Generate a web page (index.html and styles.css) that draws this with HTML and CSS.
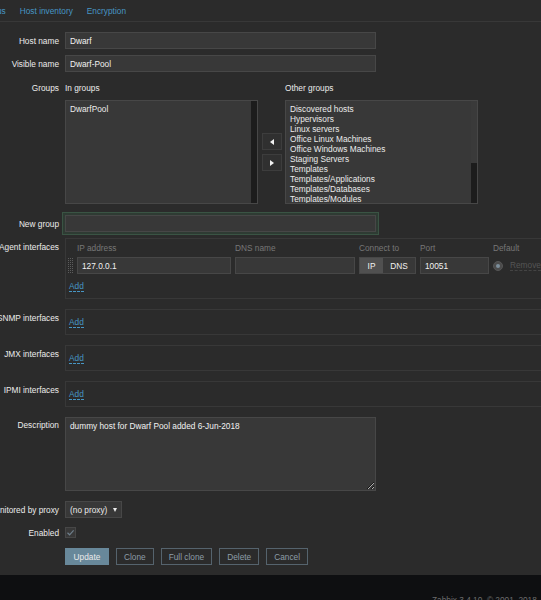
FILE: index.html
```html
<!DOCTYPE html>
<html lang="en">
<head>
    <meta charset="UTF-8">
    <meta name="viewport" content="width=device-width, initial-scale=1.0">
    <title>Configuration of hosts</title>
    <link rel="stylesheet" href="styles.css">
</head>
<body>

    <!-- Tabs -->
    <ul class="tabs">
        <li><a href="#">us</a></li>
        <li><a href="#">Host inventory</a></li>
        <li><a href="#">Encryption</a></li>
    </ul>

    <!-- Host Form -->
    <form class="host-form">
        <div class="form-row row-first">
            <label class="form-label">Host name</label>
            <div class="form-field"><input type="text" class="text-box" value="Dwarf"></div>
        </div>

        <div class="form-row row-visible">
            <label class="form-label">Visible name</label>
            <div class="form-field"><input type="text" class="text-box" value="Dwarf-Pool"></div>
        </div>

        <div class="form-row row-top row-groups">
            <label class="form-label">Groups</label>
            <div class="form-field groups">
                <div class="groups-title">In groups</div>
                <div></div>
                <div class="groups-title">Other groups</div>

                <div class="list-box">
                    <div class="list-items">
                        <div>DwarfPool</div>
                    </div>
                    <div class="list-scroll"></div>
                </div>

                <div class="move-buttons">
                    <button type="button" class="move-btn"><span class="arrow-left"></span></button>
                    <button type="button" class="move-btn"><span class="arrow-right"></span></button>
                </div>

                <div class="list-box">
                    <div class="list-items">
                        <div>Discovered hosts</div>
                        <div>Hypervisors</div>
                        <div>Linux servers</div>
                        <div>Office Linux Machines</div>
                        <div>Office Windows Machines</div>
                        <div>Staging Servers</div>
                        <div>Templates</div>
                        <div>Templates/Applications</div>
                        <div>Templates/Databases</div>
                        <div>Templates/Modules</div>
                    </div>
                    <div class="list-scroll">
                        <div class="scroll-track"></div>
                        <div class="scroll-thumb"></div>
                    </div>
                </div>
            </div>
        </div>

        <div class="form-row row-newgroup">
            <label class="form-label">New group</label>
            <div class="form-field"><input type="text" class="text-box new-group" value=""></div>
        </div>

        <!-- Interfaces -->
        <div class="form-row row-top row-agent">
            <label class="form-label label-panel">Agent interfaces</label>
            <div class="form-field">
                <div class="panel">
                    <div class="iface-grid">
                        <div></div>
                        <div class="iface-head">IP address</div>
                        <div class="iface-head">DNS name</div>
                        <div class="iface-head">Connect to</div>
                        <div class="iface-head">Port</div>
                        <div class="iface-head">Default</div>

                        <div class="drag-handle"></div>
                        <input type="text" class="text-box" value="127.0.0.1">
                        <input type="text" class="text-box" value="">
                        <div class="toggle">
                            <span class="toggle-item active">IP</span>
                            <span class="toggle-item">DNS</span>
                        </div>
                        <input type="text" class="text-box" value="10051">
                        <div class="default-cell">
                            <span class="radio"></span>
                            <span class="remove-link">Remove</span>
                        </div>
                    </div>
                    <div class="add-row"><a href="#" class="add-link">Add</a></div>
                </div>
            </div>
        </div>

        <div class="form-row row-top">
            <label class="form-label label-panel">SNMP interfaces</label>
            <div class="form-field">
                <div class="panel panel-small"><a href="#" class="add-link">Add</a></div>
            </div>
        </div>

        <div class="form-row row-top">
            <label class="form-label label-panel">JMX interfaces</label>
            <div class="form-field">
                <div class="panel panel-small"><a href="#" class="add-link">Add</a></div>
            </div>
        </div>

        <div class="form-row row-top">
            <label class="form-label label-panel">IPMI interfaces</label>
            <div class="form-field">
                <div class="panel panel-small"><a href="#" class="add-link">Add</a></div>
            </div>
        </div>

        <div class="form-row row-top">
            <label class="form-label label-desc">Description</label>
            <div class="form-field">
                <textarea class="text-area">dummy host for Dwarf Pool added 6-Jun-2018</textarea>
            </div>
        </div>

        <div class="form-row">
            <label class="form-label">Monitored by proxy</label>
            <div class="form-field">
                <div class="select-box">(no proxy) <span class="select-arrow"></span></div>
            </div>
        </div>

        <div class="form-row row-enabled">
            <label class="form-label">Enabled</label>
            <div class="form-field">
                <span class="check-box">
                    <svg width="9" height="9" viewBox="0 0 9 9"><polyline points="1.5,4.8 3.6,6.8 7.6,2.4" fill="none" stroke="#6e7f8b" stroke-width="1.2"/></svg>
                </span>
            </div>
        </div>

        <div class="form-row">
            <div></div>
            <div class="form-field buttons">
                <button type="button" class="btn btn-main">Update</button>
                <button type="button" class="btn">Clone</button>
                <button type="button" class="btn">Full clone</button>
                <button type="button" class="btn">Delete</button>
                <button type="button" class="btn">Cancel</button>
            </div>
        </div>
    </form>

    <!-- Footer -->
    <div class="footer">Zabbix 3.4.10. &copy; 2001&ndash;2018, Zabbix SIA</div>

</body>
</html>
```

FILE: styles.css
```css
/* General Styles */
html, body {
    overflow: hidden;
}

body {
    margin: 0;
    padding: 0;
    background-color: #2b2b2b;
    color: #ebebeb;
    font-family: "Liberation Sans", Arial, sans-serif;
    font-size: 8.3px;
    line-height: 10px;
}

a {
    color: #4796c4;
    text-decoration: none;
}

/* Tabs */
.tabs {
    display: flex;
    gap: 14px;
    list-style: none;
    margin: 0 0 0 -3px;
    padding: 6px 0 0 0;
    height: 15px;
    border-bottom: 1px solid #383838;
}

/* Form layout */
.host-form {
    padding: 10px 0 10px 0;
}

.form-row {
    display: grid;
    grid-template-columns: 59px 1fr;
    column-gap: 6px;
    align-items: center;
    margin-top: 10px;
}

.row-top {
    align-items: start;
}

.row-first {
    margin-top: 0;
}

.row-visible {
    margin-top: 6px;
}

.row-groups {
    margin-top: 11px;
}

.row-newgroup {
    margin-top: 11px;
}

.row-agent {
    margin-top: 6px;
}

.row-enabled {
    margin-top: 9px;
}

.form-label {
    display: flex;
    justify-content: flex-end;
    white-space: nowrap;
}

.label-panel {
    padding-top: 4px;
}

.label-desc {
    padding-top: 3px;
}

.form-field {
    min-width: 0;
}

/* Inputs */
.text-box {
    display: block;
    box-sizing: border-box;
    width: 311px;
    height: 17px;
    margin: 0;
    padding: 0 4px;
    background-color: #383838;
    border: 1px solid #474747;
    color: #f2f2f2;
    font-family: inherit;
    font-size: 8.3px;
    outline: none;
}

.new-group {
    box-shadow: 0 0 0 2px #2e3b33, 0 0 0 3px #3a5444;
}

.text-area {
    display: block;
    box-sizing: border-box;
    width: 311px;
    height: 74px;
    margin: 0;
    padding: 3px 4px;
    background-color: #383838;
    border: 1px solid #474747;
    color: #f2f2f2;
    font-family: inherit;
    font-size: 8.3px;
    line-height: 10px;
    outline: none;
}

/* Groups */
.groups {
    display: grid;
    grid-template-columns: 193px 27px 193px;
    row-gap: 7px;
}

.list-box {
    display: flex;
    height: 104px;
    box-sizing: border-box;
    background-color: #383838;
    border: 1px solid #474747;
}

.list-items {
    flex: 1;
    padding: 3px 4px;
    overflow: hidden;
    white-space: nowrap;
}

.list-scroll {
    display: flex;
    flex-direction: column;
    width: 6px;
    background-color: #1c1c1c;
}

.scroll-track {
    height: 62px;
    background-color: #3a3a3a;
}

.scroll-thumb {
    flex: 1;
    background-color: #1c1c1c;
}

.move-buttons {
    display: flex;
    flex-direction: column;
    justify-content: center;
    align-items: center;
    gap: 4px;
}

.move-btn {
    display: flex;
    align-items: center;
    justify-content: center;
    width: 20px;
    height: 17px;
    padding: 0;
    background-color: #303030;
    border: 1px solid #3d3d3d;
}

.arrow-left {
    width: 0;
    height: 0;
    border-top: 3px solid transparent;
    border-bottom: 3px solid transparent;
    border-right: 4px solid #f2f2f2;
}

.arrow-right {
    width: 0;
    height: 0;
    border-top: 3px solid transparent;
    border-bottom: 3px solid transparent;
    border-left: 4px solid #f2f2f2;
}

/* Interface panels */
.panel {
    width: 520px;
    box-sizing: border-box;
    border: 1px solid #383838;
    padding: 4px 0 7px 0;
}

.panel-small {
    padding: 7px 3px;
}

.iface-grid {
    display: grid;
    grid-template-columns: 7px 154px 120px 57px 69px 60px;
    column-gap: 4px;
    row-gap: 4px;
    align-items: center;
}

.iface-head {
    color: #777777;
}

.iface-grid .text-box {
    width: 100%;
}

/* dotted drag handle */
.drag-handle {
    justify-self: end;
    width: 5px;
    height: 15px;
    background-color: #5c5c5c;
    background-image:
        linear-gradient(to right, transparent 1px, #2b2b2b 1px),
        linear-gradient(to bottom, transparent 1px, #2b2b2b 1px);
    background-size: 2px 2px;
}

.toggle {
    display: flex;
    height: 17px;
    box-sizing: border-box;
    border: 1px solid #474747;
    background-color: #383838;
}

.toggle-item {
    display: flex;
    align-items: center;
    justify-content: center;
    flex: 1 1 33px;
    color: #f2f2f2;
}

.toggle-item.active {
    flex: 0 0 23px;
    background-color: #505050;
}

.default-cell {
    display: flex;
    align-items: center;
    gap: 7px;
    white-space: nowrap;
}

.radio {
    display: flex;
    align-items: center;
    justify-content: center;
    width: 10px;
    height: 10px;
    box-sizing: border-box;
    border-radius: 50%;
    background-color: #4c4c4c;
    border: 1px solid #555555;
}

.radio::after {
    content: "";
    width: 4px;
    height: 4px;
    border-radius: 50%;
    background-color: #7d8f9c;
}

.remove-link {
    color: #555555;
    border-bottom: 1px dashed #444444;
}

.add-row {
    margin-top: 7px;
    padding-left: 3px;
}

.add-link {
    border-bottom: 1px dashed #4796c4;
}

/* Proxy select */
.select-box {
    display: flex;
    align-items: center;
    gap: 6px;
    width: 57px;
    height: 17px;
    box-sizing: border-box;
    padding: 0 4px;
    background-color: #383838;
    border: 1px solid #474747;
    white-space: nowrap;
}

.select-arrow {
    width: 0;
    height: 0;
    border-left: 2.5px solid transparent;
    border-right: 2.5px solid transparent;
    border-top: 4px solid #ebebeb;
}

/* Checkbox */
.check-box {
    display: flex;
    align-items: center;
    justify-content: center;
    width: 11px;
    height: 11px;
    box-sizing: border-box;
    background-color: #383838;
    border: 1px solid #474747;
}

/* Buttons */
.buttons {
    display: flex;
    gap: 7px;
}

.btn {
    height: 17px;
    padding: 0 7px;
    background-color: transparent;
    border: 1px solid #55636d;
    color: #8d9da8;
    font-family: inherit;
    font-size: 8.3px;
}

.btn-main {
    width: 44px;
    background-color: #68889a;
    border-color: #68889a;
    color: #eaeaea;
}

/* Footer */
.footer {
    height: 40px;
    padding: 20px 0 0 432px;
    background-color: #0e0f11;
    color: #6c6c6c;
    white-space: nowrap;
}
```
